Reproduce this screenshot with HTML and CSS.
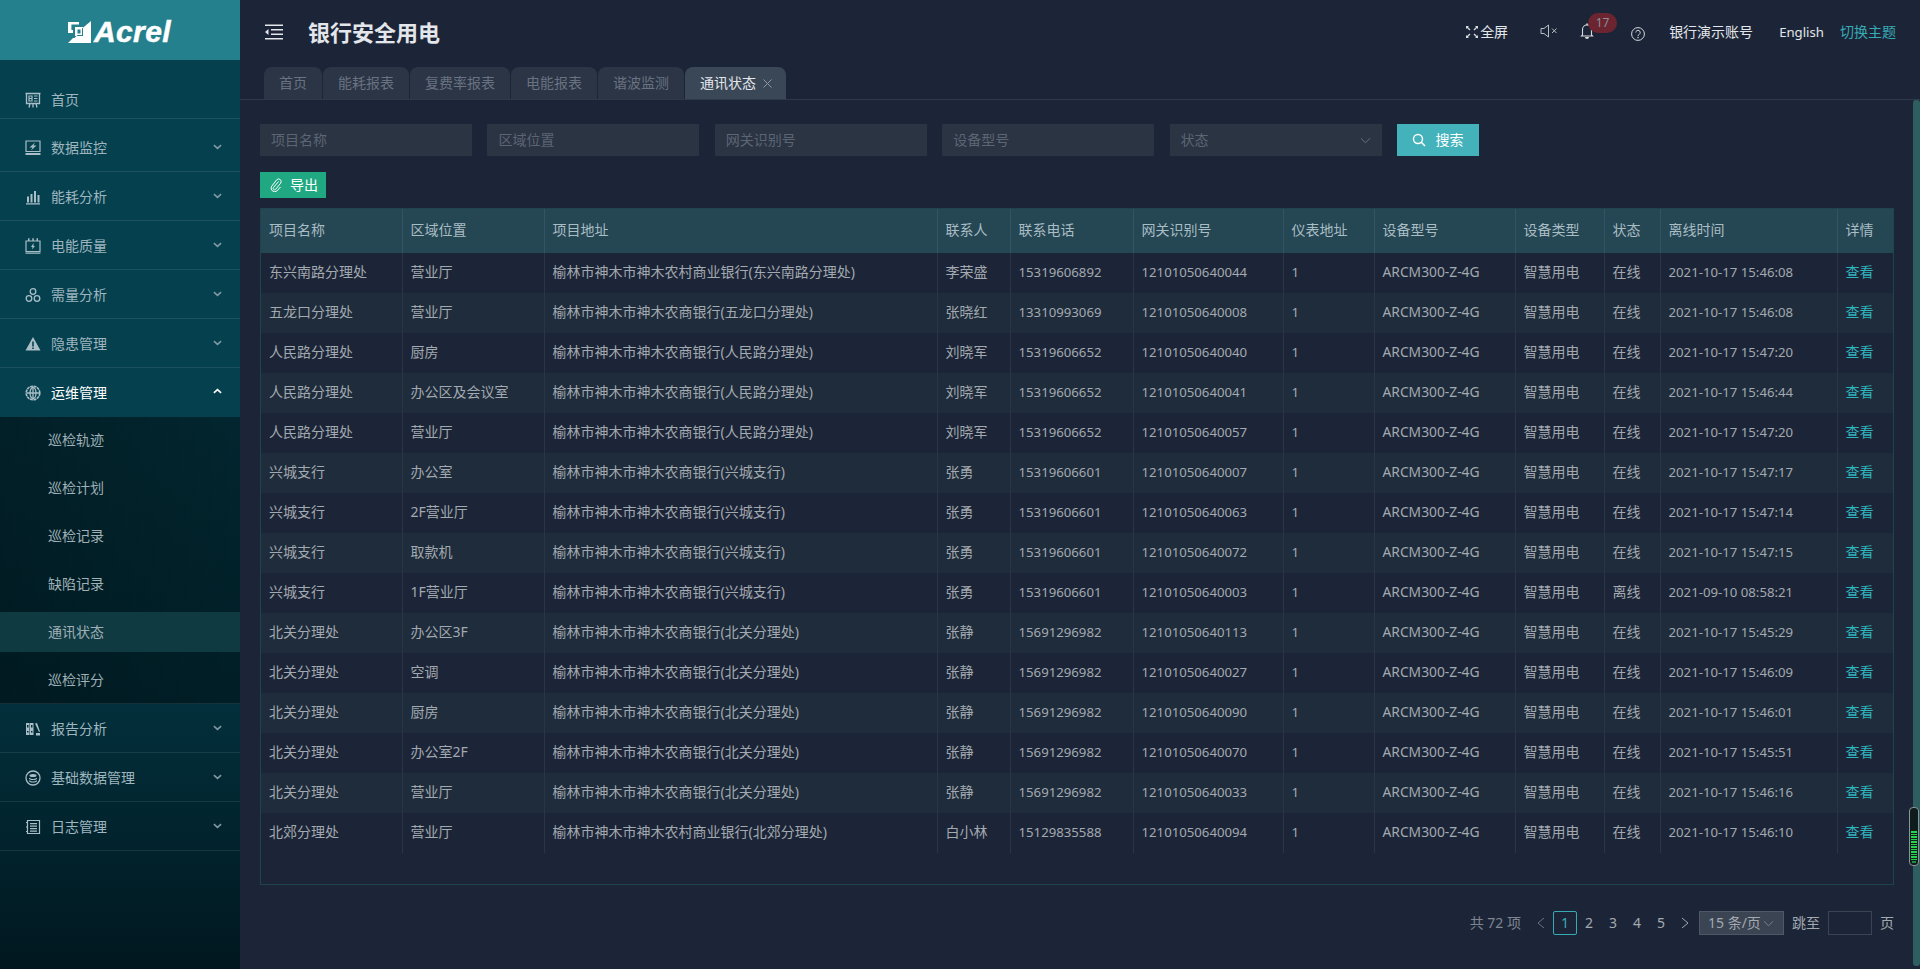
FILE: index.html
```html
<!DOCTYPE html>
<html lang="zh-CN">
<head>
<meta charset="utf-8">
<title>银行安全用电</title>
<link rel="stylesheet" href="styles.css">
</head>
<body>
<div class="app">
  <aside class="sidebar">
    <div class="logo">
      <svg class="logo-mark" viewBox="0 0 23 22" width="23" height="22"><path fill="#fff" d="M0 1h11v2.6H3.4V9H5v3H0zM23 0v22H0l5-5h1.500l3-3H14V7.500L23 0zM7 6h8v9H7zM9.500 8.500v4H12.500v-4z" fill-rule="evenodd"/></svg>
      <span class="logo-text">Acrel</span>
    </div>
    <nav class="menu">
      <a class="menu-item first">
        <svg class="mi" viewBox="0 0 16 16"><path fill="none" stroke="currentColor" stroke-width="1.300" d="M.5 1.500h15M1.500 1.500v10h13v-10M5 11.500L4 15.500M11 11.500l1 4M8 11.500v4"/><path fill="none" stroke="currentColor" stroke-width="1.200" d="M4 4h3v5H4zM4 6.500h3M9 4h3.500M9 6.500h3.500M9 9h3.500"/></svg>
        <span>首页</span>
      </a>
      <a class="menu-item gap">
        <svg class="mi" viewBox="0 0 16 16"><path fill="none" stroke="currentColor" stroke-width="1.200" d="M1 1h14v10.500H1z"/><path fill="currentColor" d="M10 2.500L4.500 7.500h3L6 10.500 11.500 5.500h-3zM.5 13h15v2H.5z"/></svg>
        <span>数据监控</span>
        <svg class="chev" viewBox="0 0 10 6"><path d="M1 1l4 3.500L9 1" fill="none" stroke="currentColor" stroke-width="1.800"/></svg>
      </a>
      <a class="menu-item">
        <svg class="mi" viewBox="0 0 16 16"><path fill="currentColor" d="M1 14.200h14v1.200H1zM2 7.500h2V13.500H2zM5.500 5h2v8.500h-2zM9 2h2v11.500H9zM12.500 6h2v7.500h-2z"/></svg>
        <span>能耗分析</span>
        <svg class="chev" viewBox="0 0 10 6"><path d="M1 1l4 3.500L9 1" fill="none" stroke="currentColor" stroke-width="1.800"/></svg>
      </a>
      <a class="menu-item">
        <svg class="mi" viewBox="0 0 16 16"><path fill="none" stroke="currentColor" stroke-width="1.200" d="M1 3h14v10.500H1z"/><path fill="currentColor" d="M3 .2h1.500V3H3zM7.300 .2h1.500V3H7.300zM11.500 .2H13V3h-1.500zM8.500 5L6 9h1.500L7 11.500 10 8H8.500zM.5 14.500h15v1.300H.5z"/></svg>
        <span>电能质量</span>
        <svg class="chev" viewBox="0 0 10 6"><path d="M1 1l4 3.500L9 1" fill="none" stroke="currentColor" stroke-width="1.800"/></svg>
      </a>
      <a class="menu-item">
        <svg class="mi" viewBox="0 0 16 16"><g fill="none" stroke="currentColor" stroke-width="1.300"><circle cx="8" cy="4.500" r="2.800"/><circle cx="4" cy="11.500" r="2.800"/><circle cx="12" cy="11.500" r="2.800"/></g></svg>
        <span>需量分析</span>
        <svg class="chev" viewBox="0 0 10 6"><path d="M1 1l4 3.500L9 1" fill="none" stroke="currentColor" stroke-width="1.800"/></svg>
      </a>
      <a class="menu-item">
        <svg class="mi" viewBox="0 0 16 16"><path fill="currentColor" fill-rule="evenodd" d="M8 1l7.500 13.500H.5zM7.200 5.500v5h1.600v-5zM7.200 11.500v1.500h1.600v-1.500z"/></svg>
        <span>隐患管理</span>
        <svg class="chev" viewBox="0 0 10 6"><path d="M1 1l4 3.500L9 1" fill="none" stroke="currentColor" stroke-width="1.800"/></svg>
      </a>
      <a class="menu-item open">
        <svg class="mi" viewBox="0 0 16 16"><g fill="none" stroke="currentColor"><circle cx="8" cy="8" r="6.800" stroke-width="1.600" stroke-dasharray="3 .6"/><ellipse cx="8" cy="8" rx="3" ry="5.500" stroke-width="1.300"/><path stroke-width="1.300" d="M8 2v12M2 8h12"/></g></svg>
        <span>运维管理</span>
        <svg class="chev" viewBox="0 0 10 6"><path d="M1 5l4-3.500L9 5" fill="none" stroke="currentColor" stroke-width="1.800"/></svg>
      </a>
      <div class="submenu">
        <a class="sub-item">巡检轨迹</a>
        <a class="sub-item">巡检计划</a>
        <a class="sub-item">巡检记录</a>
        <a class="sub-item">缺陷记录</a>
        <a class="sub-item current">通讯状态</a>
        <a class="sub-item">巡检评分</a>
      </div>
      <a class="menu-item">
        <svg class="mi" viewBox="0 0 16 16"><path fill="currentColor" fill-rule="evenodd" d="M1 2h3.500v12H1zM5 2h3.500v12H5zM2 4v2.500h1.500V4zM6 4v2.500h1.500V4zM2 10v1.500h1.500V10zM6 10v1.500h1.500V10z"/><path fill="currentColor" d="M10 2.500l2-.5 3 8.500-1 .5zM11 12h4v2.500h-4z"/></svg>
        <span>报告分析</span>
        <svg class="chev" viewBox="0 0 10 6"><path d="M1 1l4 3.500L9 1" fill="none" stroke="currentColor" stroke-width="1.800"/></svg>
      </a>
      <a class="menu-item">
        <svg class="mi" viewBox="0 0 16 16"><circle cx="8" cy="8" r="7" fill="none" stroke="currentColor" stroke-width="1.300"/><ellipse cx="8" cy="5.500" rx="3.500" ry="1.500" fill="currentColor"/><path fill="none" stroke="currentColor" stroke-width="1.200" d="M4.500 8c0 2 7 2 7 0M4.500 10.500c0 2 7 2 7 0"/></svg>
        <span>基础数据管理</span>
        <svg class="chev" viewBox="0 0 10 6"><path d="M1 1l4 3.500L9 1" fill="none" stroke="currentColor" stroke-width="1.800"/></svg>
      </a>
      <a class="menu-item">
        <svg class="mi" viewBox="0 0 16 16"><path fill="none" stroke="currentColor" stroke-width="1.200" d="M2.500 1.500h12v13h-12z"/><path fill="currentColor" d="M5 4h7v1.300H5zM5 6.500h7v1.300H5zM5 9h7v1.300H5zM5 11.500h7v1.300H5zM1 3h2v1H1zM1 7.500h2v1H1zM1 12h2v1H1z"/></svg>
        <span>日志管理</span>
        <svg class="chev" viewBox="0 0 10 6"><path d="M1 1l4 3.500L9 1" fill="none" stroke="currentColor" stroke-width="1.800"/></svg>
      </a>
    </nav>
  </aside>

  <main class="main">
    <header class="topbar">
      <svg class="fold" viewBox="0 0 18 16"><path fill="#e3e6ea" d="M0 .5h18V2H0zM6 5h12v1.500H6zM6 9.500h12V11H6zM0 14h18v1.500H0zM3.500 5v6L0 8z"/></svg>
      <h1 class="title">银行安全用电</h1>
      <div class="tools">
        <span class="tool fs">
          <svg class="ico12" viewBox="0 0 12 12"><path fill="none" stroke="#d7dade" stroke-width="1.300" d="M.7.700L4 4M11.300.700L8 4M.7 11.300L4 8M11.300 11.300L8 8"/><path fill="#d7dade" d="M0 0h3L0 3zM12 0H9l3 3zM0 12h3l-3-3zM12 12H9l3-3z"/></svg>全屏
        </span>
        <svg class="vol" viewBox="0 0 18 14"><path fill="none" stroke="#b9bdc3" d="M1 4.500h3L8.500 1v12L4 9.500H1z"/><path fill="none" stroke="#b9bdc3" d="M12 4.500l4.500 4.500M16.500 4.500L12 9"/></svg>
        <span class="bell-wrap">
          <svg class="bell" viewBox="0 0 14 16"><path fill="none" stroke="#d7dade" stroke-width="1.100" d="M2.500 12V6.500a4.500 4.500 0 0 1 9 0V12l1 1h-11z"/><path fill="#d7dade" d="M5 14h4a2 2 0 0 1-4 0zM6.200 .500h1.600v1.500H6.200z"/></svg>
          <span class="badge">17</span>
        </span>
        <svg class="help" viewBox="0 0 14 14"><circle cx="7" cy="7" r="6.400" fill="none" stroke="#d7dade" stroke-width="1"/><path fill="none" stroke="#d7dade" d="M4.800 5.500a2.200 2.200 0 1 1 3.500 1.800c-.8.500-1.300 1-1.300 1.900"/><rect x="6.400" y="10" width="1.200" height="1.200" fill="#d7dade"/></svg>
        <span class="tool acc">银行演示账号</span>
        <span class="tool lang">English</span>
        <span class="tool theme">切换主题</span>
      </div>
    </header>

    <div class="tabs">
      <span class="tab">首页</span>
      <span class="tab">能耗报表</span>
      <span class="tab">复费率报表</span>
      <span class="tab">电能报表</span>
      <span class="tab">谐波监测</span>
      <span class="tab active">通讯状态<svg class="tab-x" viewBox="0 0 9 9"><path d="M.5.5l8 8M8.500.5l-8 8" fill="none" stroke="#8d96a2"/></svg></span>
    </div>

    <section class="content">
      <div class="filters">
        <div class="field">项目名称</div>
        <div class="field">区域位置</div>
        <div class="field">网关识别号</div>
        <div class="field">设备型号</div>
        <div class="field select">状态<svg class="arrow" viewBox="0 0 12 7"><path d="M1 1l5 5 5-5" fill="none" stroke="#6d7684"/></svg></div>
        <button class="btn-search"><svg class="ico14" viewBox="0 0 14 14"><circle cx="6" cy="6" r="4.500" fill="none" stroke="#fff" stroke-width="1.400"/><path d="M9.300 9.300L13 13" stroke="#fff" stroke-width="1.600"/></svg>搜索</button>
      </div>
      <button class="btn-export"><svg class="ico14" viewBox="0 0 12 14"><path fill="none" stroke="#fff" d="M8.500 3.500L3.500 9.500a1.400 1.400 0 0 0 2.200 1.800l5-6.200a2.600 2.600 0 0 0-4-3.300L1.500 8.500a3.600 3.600 0 0 0 5.500 4.400L10.500 9"/></svg>导出</button>

      <div class="table-box">
        <table class="grid">
          <colgroup>
            <col class="c1"><col class="c2"><col class="c3"><col class="c4"><col class="c5"><col class="c6"><col class="c7"><col class="c8"><col class="c9"><col class="c10"><col class="c11"><col class="c12">
          </colgroup>
          <thead>
            <tr><th>项目名称</th><th>区域位置</th><th>项目地址</th><th>联系人</th><th>联系电话</th><th>网关识别号</th><th>仪表地址</th><th>设备型号</th><th>设备类型</th><th>状态</th><th>离线时间</th><th>详情</th></tr>
          </thead>
          <tbody>
            <tr><td>东兴南路分理处</td><td>营业厅</td><td>榆林市神木市神木农村商业银行(东兴南路分理处)</td><td>李荣盛</td><td class="num">15319606892</td><td class="num">12101050640044</td><td class="num">1</td><td class="model">ARCM300-Z-4G</td><td>智慧用电</td><td>在线</td><td class="num">2021-10-17 15:46:08</td><td class="link">查看</td></tr>
            <tr><td>五龙口分理处</td><td>营业厅</td><td>榆林市神木市神木农商银行(五龙口分理处)</td><td>张晓红</td><td class="num">13310993069</td><td class="num">12101050640008</td><td class="num">1</td><td class="model">ARCM300-Z-4G</td><td>智慧用电</td><td>在线</td><td class="num">2021-10-17 15:46:08</td><td class="link">查看</td></tr>
            <tr><td>人民路分理处</td><td>厨房</td><td>榆林市神木市神木农商银行(人民路分理处)</td><td>刘晓军</td><td class="num">15319606652</td><td class="num">12101050640040</td><td class="num">1</td><td class="model">ARCM300-Z-4G</td><td>智慧用电</td><td>在线</td><td class="num">2021-10-17 15:47:20</td><td class="link">查看</td></tr>
            <tr><td>人民路分理处</td><td>办公区及会议室</td><td>榆林市神木市神木农商银行(人民路分理处)</td><td>刘晓军</td><td class="num">15319606652</td><td class="num">12101050640041</td><td class="num">1</td><td class="model">ARCM300-Z-4G</td><td>智慧用电</td><td>在线</td><td class="num">2021-10-17 15:46:44</td><td class="link">查看</td></tr>
            <tr><td>人民路分理处</td><td>营业厅</td><td>榆林市神木市神木农商银行(人民路分理处)</td><td>刘晓军</td><td class="num">15319606652</td><td class="num">12101050640057</td><td class="num">1</td><td class="model">ARCM300-Z-4G</td><td>智慧用电</td><td>在线</td><td class="num">2021-10-17 15:47:20</td><td class="link">查看</td></tr>
            <tr><td>兴城支行</td><td>办公室</td><td>榆林市神木市神木农商银行(兴城支行)</td><td>张勇</td><td class="num">15319606601</td><td class="num">12101050640007</td><td class="num">1</td><td class="model">ARCM300-Z-4G</td><td>智慧用电</td><td>在线</td><td class="num">2021-10-17 15:47:17</td><td class="link">查看</td></tr>
            <tr><td>兴城支行</td><td>2F营业厅</td><td>榆林市神木市神木农商银行(兴城支行)</td><td>张勇</td><td class="num">15319606601</td><td class="num">12101050640063</td><td class="num">1</td><td class="model">ARCM300-Z-4G</td><td>智慧用电</td><td>在线</td><td class="num">2021-10-17 15:47:14</td><td class="link">查看</td></tr>
            <tr><td>兴城支行</td><td>取款机</td><td>榆林市神木市神木农商银行(兴城支行)</td><td>张勇</td><td class="num">15319606601</td><td class="num">12101050640072</td><td class="num">1</td><td class="model">ARCM300-Z-4G</td><td>智慧用电</td><td>在线</td><td class="num">2021-10-17 15:47:15</td><td class="link">查看</td></tr>
            <tr><td>兴城支行</td><td>1F营业厅</td><td>榆林市神木市神木农商银行(兴城支行)</td><td>张勇</td><td class="num">15319606601</td><td class="num">12101050640003</td><td class="num">1</td><td class="model">ARCM300-Z-4G</td><td>智慧用电</td><td>离线</td><td class="num">2021-09-10 08:58:21</td><td class="link">查看</td></tr>
            <tr><td>北关分理处</td><td>办公区3F</td><td>榆林市神木市神木农商银行(北关分理处)</td><td>张静</td><td class="num">15691296982</td><td class="num">12101050640113</td><td class="num">1</td><td class="model">ARCM300-Z-4G</td><td>智慧用电</td><td>在线</td><td class="num">2021-10-17 15:45:29</td><td class="link">查看</td></tr>
            <tr><td>北关分理处</td><td>空调</td><td>榆林市神木市神木农商银行(北关分理处)</td><td>张静</td><td class="num">15691296982</td><td class="num">12101050640027</td><td class="num">1</td><td class="model">ARCM300-Z-4G</td><td>智慧用电</td><td>在线</td><td class="num">2021-10-17 15:46:09</td><td class="link">查看</td></tr>
            <tr><td>北关分理处</td><td>厨房</td><td>榆林市神木市神木农商银行(北关分理处)</td><td>张静</td><td class="num">15691296982</td><td class="num">12101050640090</td><td class="num">1</td><td class="model">ARCM300-Z-4G</td><td>智慧用电</td><td>在线</td><td class="num">2021-10-17 15:46:01</td><td class="link">查看</td></tr>
            <tr><td>北关分理处</td><td>办公室2F</td><td>榆林市神木市神木农商银行(北关分理处)</td><td>张静</td><td class="num">15691296982</td><td class="num">12101050640070</td><td class="num">1</td><td class="model">ARCM300-Z-4G</td><td>智慧用电</td><td>在线</td><td class="num">2021-10-17 15:45:51</td><td class="link">查看</td></tr>
            <tr><td>北关分理处</td><td>营业厅</td><td>榆林市神木市神木农商银行(北关分理处)</td><td>张静</td><td class="num">15691296982</td><td class="num">12101050640033</td><td class="num">1</td><td class="model">ARCM300-Z-4G</td><td>智慧用电</td><td>在线</td><td class="num">2021-10-17 15:46:16</td><td class="link">查看</td></tr>
            <tr><td>北郊分理处</td><td>营业厅</td><td>榆林市神木市神木农村商业银行(北郊分理处)</td><td>白小林</td><td class="num">15129835588</td><td class="num">12101050640094</td><td class="num">1</td><td class="model">ARCM300-Z-4G</td><td>智慧用电</td><td>在线</td><td class="num">2021-10-17 15:46:10</td><td class="link">查看</td></tr>
          </tbody>
        </table>
      </div>

      <div class="pager">
        <span class="total">共 72 项</span>
        <span class="pg arrow-pg"><svg class="pg-arrow" viewBox="0 0 8 12"><path d="M7 1L1 6l6 5" fill="none" stroke="#6c7480"/></svg></span>
        <span class="pg on">1</span>
        <span class="pg">2</span>
        <span class="pg">3</span>
        <span class="pg">4</span>
        <span class="pg">5</span>
        <span class="pg arrow-pg"><svg class="pg-arrow" viewBox="0 0 8 12"><path d="M1 1l6 5-6 5" fill="none" stroke="#a0a6ac"/></svg></span>
        <span class="size">15 条/页<svg class="arrow" viewBox="0 0 12 7"><path d="M1 1l5 5 5-5" fill="none" stroke="#7d8591"/></svg></span>
        <span class="jump">跳至</span>
        <span class="jump-input"></span>
        <span class="jump-end">页</span>
      </div>
    </section>
  </main>

  <div class="page-scroll"></div>
  <div class="meter">
    <i></i><i></i><i></i><i></i><i></i><i></i><i></i><i></i><i></i><i></i><i></i><i></i><i></i>
  </div>
</div>
</body>
</html>
```
FILE: styles.css
```css
* { box-sizing: border-box; }
html, body { margin: 0; height: 100%; overflow: hidden; }
body {
  background: #1c2537;
  color: #a3a9b0;
  font: 14px/20px "Noto Sans", "Noto Sans CJK SC", sans-serif;
}
.app { display: flex; height: 969px; position: relative; }

/* sidebar */
.sidebar {
  width: 240px;
  flex: none;
  display: flex;
  flex-direction: column;
  background: linear-gradient(180deg, #05404f 0%, #05404f 42%, #02303c 72%, #01171f 100%);
}
.logo {
  height: 60px;
  background: #24808c;
  display: flex;
  align-items: center;
  justify-content: center;
  gap: 3px;
  padding: 4px 1px 0 0;
}
.logo-mark { flex: none; }
.logo-text {
  font: italic 700 30px/34px "Liberation Sans", sans-serif;
  letter-spacing: .4px;
  color: #fff;
  -webkit-text-stroke: .5px #fff;
}
.menu { padding-top: 20px; display: flex; flex-direction: column; }
.menu-item {
  height: 49px;
  display: flex;
  align-items: center;
  padding: 2px 18px 0 25px;
  color: #9fb6bf;
  border-bottom: 1px solid rgba(255, 255, 255, .09);
}
.menu-item.first { height: 39px; }
.menu-item.gap { margin-top: 4px; }
.menu-item span { margin-left: 10px; flex: 1; }
.menu-item.open { color: #fff; border-bottom: 0; padding-top: 0; }
.mi { width: 16px; height: 16px; flex: none; color: #a9bec6; }
.chev { width: 9px; height: 6px; flex: none; color: #7f98a1; margin-top: -3px; }
.open .chev { color: #fff; }
.submenu {
  height: 287px;
  background: linear-gradient(90deg, rgba(0, 12, 16, .62), rgba(0, 12, 16, .5));
  padding-top: 3px;
  display: flex;
  flex-direction: column;
  border-bottom: 1px solid rgba(255, 255, 255, .09);
}
.sub-item {
  height: 40px;
  margin-bottom: 8px;
  padding-left: 48px;
  line-height: 40px;
  color: #9fb0b6;
  flex: none;
}
.sub-item.current { background: #0f3a42; }

/* top bar */
.main { flex: 1; min-width: 0; display: flex; flex-direction: column; }
.topbar { height: 67px; flex: none; display: flex; align-items: center; padding: 0 24px 3px 25px; }
.fold { width: 18px; height: 16px; flex: none; }
.title {
  margin: -3px 0 0 25px;
  font: 700 22px/30px "Noto Sans CJK SC", sans-serif;
  color: #e3e6ea;
}
.tools { margin-left: auto; display: flex; align-items: center; color: #e3e6ea; }
.tool { display: flex; align-items: center; }
.ico12 { width: 12px; height: 12px; margin-right: 2px; flex: none; }
.ico14 { width: 14px; height: 14px; flex: none; }
.vol { width: 18px; height: 14px; margin: -2px 0 0 32px; flex: none; }
.bell-wrap { position: relative; margin: -2px 0 0 22px; width: 14px; height: 16px; }
.bell { width: 14px; height: 16px; display: block; }
.badge {
  position: absolute;
  left: 8px;
  top: -10px;
  width: 29px;
  height: 20px;
  border-radius: 10px;
  background: #6c2430;
  color: #8b8f99;
  font-size: 12px;
  line-height: 20px;
  text-align: center;
}
.help { width: 14px; height: 14px; margin: 4px 0 0 37px; flex: none; }
.acc { margin-left: 24px; }
.lang { margin-left: 26px; font-size: 13.2px; }
.theme { margin-left: 16px; color: #38aab5; }

/* tabs */
.tabs {
  height: 33px;
  flex: none;
  display: flex;
  padding-left: 24px;
  border-bottom: 1px solid #2c3a4a;
}
.tab {
  height: 32px;
  padding: 0 15px;
  background: #2b3546;
  border-radius: 8px 8px 0 0;
  margin-right: 1px;
  line-height: 32px;
  color: #697281;
}
.tab.active { background: #3a4757; color: #e3e6ea; padding-right: 14px; display: flex; align-items: center; }
.tab-x { width: 9px; height: 9px; margin-left: 7px; flex: none; }

/* filters */
.content { padding: 24px 27px 0 20px; flex: 1; display: flex; flex-direction: column; min-height: 0; }
.filters { display: flex; gap: 15.4px; }
.field {
  width: 212px;
  height: 32px;
  background: #2b3443;
  padding-left: 11px;
  line-height: 32px;
  color: #5c6573;
  position: relative;
  display: flex;
  align-items: center;
}
.select { justify-content: space-between; padding-right: 11px; padding-left: 11px; }
.arrow { width: 11px; height: 7px; flex: none; }
.btn-search {
  width: 82px;
  height: 32px;
  background: #43b2bb;
  border: 0;
  color: #fff;
  font: inherit;
  display: flex;
  align-items: center;
  justify-content: center;
  gap: 9px;
  padding: 0;
}
.btn-export {
  width: 66px;
  height: 26px;
  margin-top: 16px;
  background: #1fa882;
  border: 0;
  color: #fff;
  font: inherit;
  display: flex;
  align-items: center;
  gap: 7px;
  padding: 0 0 0 9px;
  flex: none;
}

/* table */
.table-box {
  margin-top: 10px;
  height: 677px;
  width: 1634px;
  border: 1px solid #1f4450;
  flex: none;
}
.grid { width: 1632px; table-layout: fixed; border-collapse: collapse; }
.c1 { width: 141px; }
.c2 { width: 142px; }
.c3 { width: 393px; }
.c4 { width: 73px; }
.c5 { width: 123px; }
.c6 { width: 150px; }
.c7 { width: 91px; }
.c8 { width: 141px; }
.c9 { width: 89px; }
.c10 { width: 56px; }
.c11 { width: 177px; }
.c12 { width: 56px; }
.grid th, .grid td {
  padding: 0 0 2px 8px;
  text-align: left;
  font-weight: 400;
  white-space: nowrap;
  overflow: hidden;
}
.grid th {
  height: 44px;
  background: #254653;
  color: #a9bdc4;
  border-right: 1px solid #315564;
}
.grid td {
  height: 40px;
  border-right: 1px solid #2a3546;
  color: #a3a9b0;
}
.grid tbody tr:nth-child(even) td { background: #1e2c3b; }
.grid th:last-child, .grid td:last-child { border-right: 0; }
.grid td.num { font-size: 13.2px; }
.grid td.model { font-size: 13.8px; }
.grid td.link { color: #2fb3bd; }

/* pager */
.pager {
  margin-top: 26px;
  height: 24px;
  width: 1634px;
  display: flex;
  align-items: center;
  justify-content: flex-end;
  color: #a3a9b0;
}
.total { margin-right: 8px; color: #7f8691; }
.pg { width: 24px; height: 24px; line-height: 22px; text-align: center; border: 1px solid transparent; border-radius: 2px; display: flex; align-items: center; justify-content: center; }
.pg.on { border-color: #38aab5; color: #38aab5; }
.pg-arrow { width: 8px; height: 12px; }
.size {
  width: 85px;
  height: 24px;
  margin-left: 2px;
  background: #3b4452;
  border: 1px solid #4f5866;
  padding: 0 9px 0 8px;
  display: flex;
  align-items: center;
  justify-content: space-between;
}
.jump { margin-left: 8px; }
.jump-input { width: 44px; height: 24px; margin-left: 8px; border: 1px solid #3b4452; }
.jump-end { margin-left: 8px; }

/* overlays */
.page-scroll {
  position: absolute;
  right: 0;
  top: 100px;
  width: 7px;
  height: 866px;
  border-radius: 3px;
  background: #2f5e60;
}
.meter {
  position: absolute;
  left: 1909px;
  top: 807px;
  width: 10px;
  height: 59px;
  border: 1px solid #8b9499;
  border-radius: 4px;
  background: #0f1c1c;
  padding: 23px 1px 1px;
  display: flex;
  flex-direction: column;
  gap: 1px;
}
.meter i { height: 1.500px; background: #23d24d; flex: none; }
.meter i:last-child { background: #1d8f3c; width: 60%; align-self: center; }
```
